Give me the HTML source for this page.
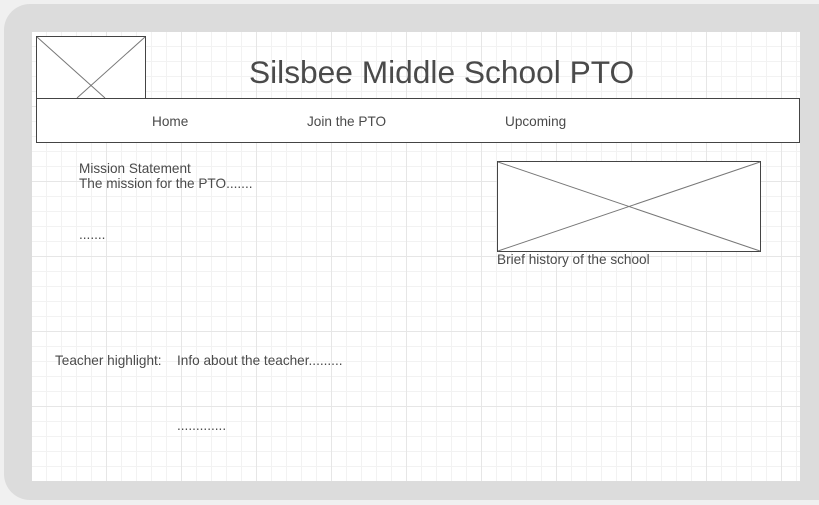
<!DOCTYPE html>
<html><head><style>
body{margin:0;width:819px;height:505px;background:#f0f0f0;position:relative;overflow:hidden;font-family:"Liberation Sans",sans-serif;color:#4a4a4a}
.frame{position:absolute;left:4px;top:4px;width:840px;height:496px;background:#dcdcdc;border-radius:26px}
.canvas{position:absolute;left:32px;top:32px;width:768px;height:449px;background-color:#fff;
background-image:linear-gradient(#e6e6e6 1px,transparent 1px),linear-gradient(90deg,#e6e6e6 1px,transparent 1px),linear-gradient(#f2f2f2 1px,transparent 1px),linear-gradient(90deg,#f2f2f2 1px,transparent 1px);
background-size:75px 75px,75px 75px,15px 15px,15px 15px;background-position:-1px -1px}
.t{position:absolute;font-size:13.6px;white-space:nowrap}
svg{position:absolute}
</style></head><body>
<div class="frame"></div>
<div class="canvas"></div>
<svg style="left:0;top:0" width="819" height="505">
<rect x="36.5" y="36.5" width="109" height="62" fill="#fff" stroke="#444"/>
<line x1="37" y1="37" x2="105" y2="98" stroke="#777"/>
<line x1="145" y1="37" x2="77" y2="98" stroke="#777"/>
<rect x="36.5" y="98.5" width="763" height="44" fill="#fff" stroke="#444"/>
<rect x="497.5" y="161.5" width="263" height="90" fill="#fff" stroke="#444"/>
<line x1="498" y1="162" x2="760" y2="251" stroke="#777"/>
<line x1="760" y1="162" x2="498" y2="251" stroke="#777"/>
</svg>
<div class="t" style="left:249px;top:54px;font-size:31.7px">Silsbee Middle School PTO</div>
<div class="t" style="left:152px;top:114px">Home</div>
<div class="t" style="left:307px;top:114px">Join the PTO</div>
<div class="t" style="left:505px;top:114px">Upcoming</div>
<div class="t" style="left:79px;top:161px">Mission Statement</div>
<div class="t" style="left:79px;top:176px">The mission for the PTO.......</div>
<div class="t" style="left:79px;top:227px">.......</div>
<div class="t" style="left:497px;top:252px">Brief history of the school</div>
<div class="t" style="left:55px;top:353px">Teacher highlight:</div>
<div class="t" style="left:177px;top:353px">Info about the teacher.........</div>
<div class="t" style="left:177px;top:418px">.............</div>
</body></html>
